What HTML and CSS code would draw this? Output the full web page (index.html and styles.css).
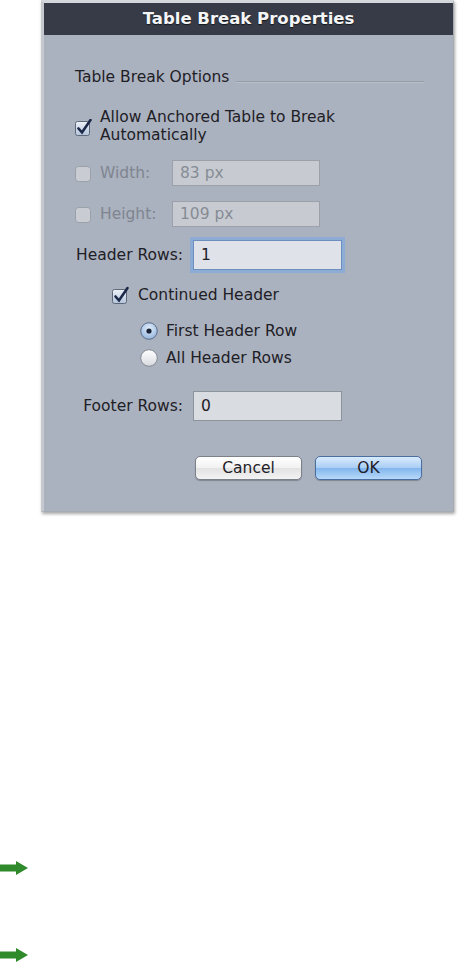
FILE: index.html
```html
<!DOCTYPE html>
<html lang="en">
<head>
  <meta charset="UTF-8">
  <meta name="viewport" content="width=device-width, initial-scale=1.0">
  <title>Table Break Properties</title>
  <link rel="stylesheet" href="styles.css">
</head>
<body>
  <div class="dialog">
    <div class="titlebar">Table Break Properties</div>
    <div class="content">

      <div class="group-title">
        <span>Table Break Options</span>
        <span class="rule"></span>
      </div>

      <div class="row check-row auto-row">
        <svg class="box" width="17" height="17" viewBox="0 0 17 17">
          <defs>
            <linearGradient id="chk" x1="0" y1="0" x2="0" y2="1">
              <stop offset="0" stop-color="#eef2f8"/>
              <stop offset="1" stop-color="#b3c3dc"/>
            </linearGradient>
          </defs>
          <rect x="0.5" y="2.5" width="14" height="14" rx="2" fill="url(#chk)" stroke="#5f6878"/>
          <path d="M3.5 9.5 L7 13.5 L15.5 1" fill="none" stroke="#1b2848" stroke-width="2.6" stroke-linecap="round"/>
        </svg>
        <span class="text">Allow Anchored Table to Break<br>Automatically</span>
      </div>

      <div class="row size-row off">
        <svg class="box" width="17" height="17" viewBox="0 0 17 17">
          <rect x="0.5" y="1.5" width="15" height="15" rx="3" fill="#c9cdd3" stroke="#9aa0a8"/>
        </svg>
        <span class="size-label">Width:</span>
        <input class="field small" type="text" value="83 px" disabled>
      </div>

      <div class="row size-row off height-row">
        <svg class="box" width="17" height="17" viewBox="0 0 17 17">
          <rect x="0.5" y="1.5" width="15" height="15" rx="3" fill="#c9cdd3" stroke="#9aa0a8"/>
        </svg>
        <span class="size-label">Height:</span>
        <input class="field small" type="text" value="109 px" disabled>
      </div>

      <div class="row field-row header-row">
        <span class="field-label">Header Rows:</span>
        <input class="field wide focus" type="text" value="1">
      </div>

      <div class="row check-row continued">
        <svg class="box" width="18" height="18" viewBox="0 0 18 18">
          <rect x="0.5" y="3.5" width="14" height="14" rx="2" fill="url(#chk)" stroke="#5f6878"/>
          <path d="M3.5 10.5 L7 14.5 L15.5 2" fill="none" stroke="#1b2848" stroke-width="2.6" stroke-linecap="round"/>
        </svg>
        <span class="text">Continued Header</span>
      </div>

      <div class="row radio-row first">
        <svg class="box" width="18" height="18" viewBox="0 0 18 18">
          <defs>
            <radialGradient id="rad-on" cx="0.5" cy="0.35" r="0.7">
              <stop offset="0" stop-color="#e3eefa"/>
              <stop offset="1" stop-color="#8eb0dc"/>
            </radialGradient>
            <linearGradient id="rad-off" x1="0" y1="0" x2="0" y2="1">
              <stop offset="0" stop-color="#ffffff"/>
              <stop offset="1" stop-color="#d6d9de"/>
            </linearGradient>
          </defs>
          <circle cx="9" cy="9" r="8.3" fill="url(#rad-on)" stroke="#5b6c88"/>
          <circle cx="9" cy="9" r="2.6" fill="#1a2236"/>
        </svg>
        <span class="text">First Header Row</span>
      </div>

      <div class="row radio-row second">
        <svg class="box" width="18" height="18" viewBox="0 0 18 18">
          <circle cx="9" cy="9" r="8.3" fill="url(#rad-off)" stroke="#858b94"/>
        </svg>
        <span class="text">All Header Rows</span>
      </div>

      <div class="row field-row footer-row">
        <span class="field-label">Footer Rows:</span>
        <input class="field wide" type="text" value="0">
      </div>

      <div class="buttons">
        <button class="btn">Cancel</button>
        <button class="btn ok">OK</button>
      </div>

    </div>
  </div>

  <div class="arrows">
    <div class="arrow">
      <svg width="28" height="14" viewBox="0 0 28 14">
        <path d="M0 3.5 H16 V0 L28 7 L16 14 V10.5 H0 Z" fill="#2f8a2c"/>
      </svg>
    </div>
    <div class="arrow second-arrow">
      <svg width="28" height="14" viewBox="0 0 28 14">
        <path d="M0 3.5 H16 V0 L28 7 L16 14 V10.5 H0 Z" fill="#2f8a2c"/>
      </svg>
    </div>
  </div>
</body>
</html>
```

FILE: styles.css
```css
body {
  margin: 0;
  background: #ffffff;
  font-family: "DejaVu Sans", "Liberation Sans", sans-serif;
  font-size: 15.5px;
  color: #1e2026;
}

.dialog {
  margin-left: 41px;
  width: 409px;
  border: 1px solid #a6aab1;
  border-top: 3px solid #d4d7db;
  border-left: 3px solid #c6cace;
  background: #abb2bf;
  box-shadow: 1px 2px 3px rgba(0, 0, 0, 0.35);
}

.titlebar {
  height: 32px;
  line-height: 32px;
  background: #363b47;
  color: #f4f5f7;
  text-align: center;
  font-weight: bold;
  font-size: 16.5px;
  text-shadow: 0 1px 1px rgba(0, 0, 0, 0.6);
}

.content {
  display: flex;
  flex-direction: column;
  padding: 0 0 31px 0;
}

.row {
  display: flex;
  align-items: center;
}

.group-title {
  display: flex;
  align-items: center;
  height: 20px;
  margin: 32px 29px 0 31px;
}

.group-title .rule {
  flex: 1;
  height: 1px;
  margin: 9px 0 0 7px;
  background: #959ca8;
  border-bottom: 1px solid #b9bfc9;
}

.box {
  flex: none;
}

.check-row .text,
.radio-row .text {
  margin-left: 8px;
}

.auto-row {
  margin: 21px 0 0 31px;
  line-height: 18px;
}

.auto-row .box {
  margin-top: 2px;
}

.size-row {
  margin-left: 31px;
  height: 26px;
  margin-top: 16px;
}

.height-row {
  margin-top: 15px;
}

.off {
  color: #7f858f;
}

.size-label {
  width: 72px;
  margin-left: 8px;
}

.field {
  box-sizing: border-box;
  font: inherit;
  padding: 0 7px;
  border: 1px solid #8e949c;
  background: #d9dce1;
  color: #1e2026;
  outline: none;
}

.field.small {
  width: 148px;
  height: 26px;
  background: #c7cbd1;
  border-color: #9ca1a9;
  color: #868b94;
}

.field.wide {
  width: 149px;
  height: 30px;
}

.field.focus {
  background: #dfe3e9;
  border-color: #6d8fbf;
  box-shadow: 0 0 0 3px rgba(130, 170, 222, 0.75);
}

.field-label {
  width: 139px;
  text-align: right;
  margin-right: 10px;
}

.header-row {
  margin-top: 13px;
}

.continued {
  margin: 15px 0 0 68px;
  height: 20px;
}

.first {
  margin: 16px 0 0 96px;
  height: 20px;
}

.second {
  margin: 7px 0 0 96px;
  height: 20px;
}

.footer-row {
  margin-top: 23px;
}

.buttons {
  display: flex;
  gap: 13px;
  margin: 35px 0 0 151px;
}

.btn {
  width: 107px;
  height: 24px;
  font: inherit;
  font-size: 15.5px;
  color: #1e2026;
  border: 1px solid #7b8089;
  border-radius: 5px;
  background: linear-gradient(#ffffff, #f1f1f1 50%, #e2e2e2 51%, #f3f3f3);
  box-shadow: 0 1px 1px rgba(0, 0, 0, 0.25);
}

.btn.ok {
  border-color: #4a6e9f;
  background: linear-gradient(#d9ebfd, #a9cdf4 50%, #82b6ee 51%, #b7d9f9);
}

.arrows {
  margin-top: 349px;
}

.arrow svg {
  display: block;
}

.second-arrow {
  margin-top: 73px;
}
```
